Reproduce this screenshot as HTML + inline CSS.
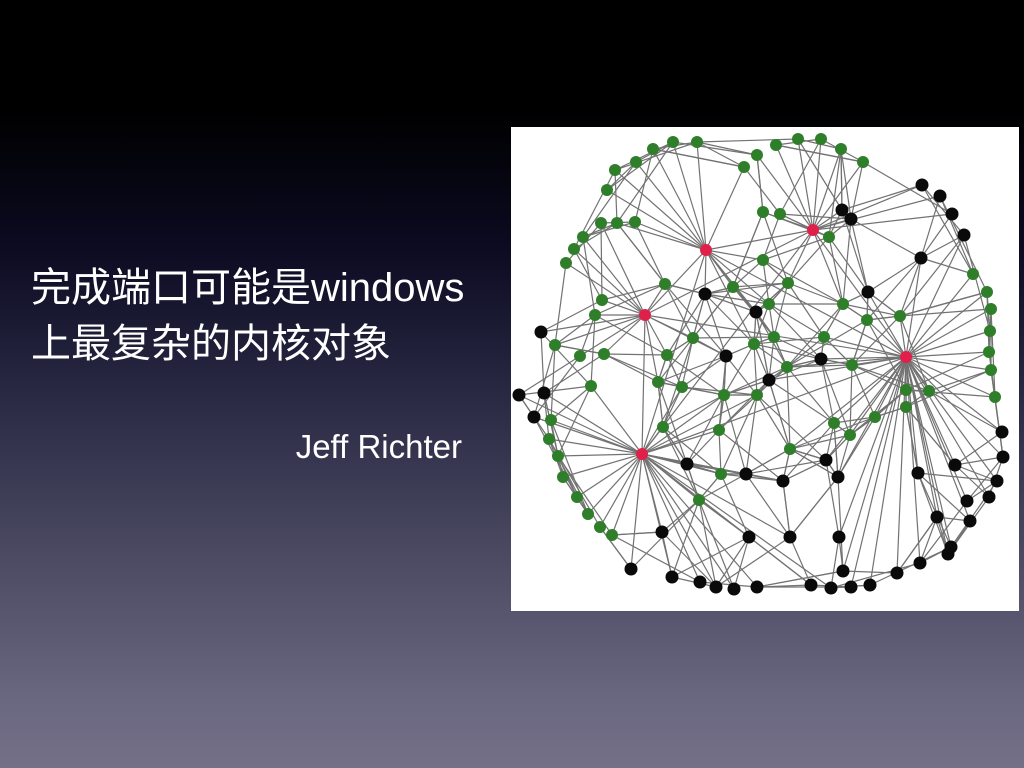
<!DOCTYPE html>
<html><head><meta charset="utf-8">
<style>
html,body{margin:0;padding:0;}
body{width:1024px;height:768px;overflow:hidden;position:relative;
background:linear-gradient(to bottom,#000 0px,#000 110px,#0c0b22 250px,#2a2a45 400px,#4c4b63 560px,#6a6780 700px,#747088 768px);
font-family:"Liberation Sans","Noto Sans CJK SC",sans-serif;color:#fff;}
.t{position:absolute;left:31px;font-size:40px;line-height:40px;white-space:nowrap;}
.a{position:absolute;right:562px;top:430px;font-size:33px;line-height:34px;}
.img{position:absolute;left:511px;top:127px;width:508px;height:484px;background:#fff;}
</style></head><body>
<div class="t" style="top:268px">完成端口可能是windows</div>
<div class="t" style="top:324px">上最复杂的内核对象</div>
<div class="a">Jeff Richter</div>
<div class="img"><svg id="g" width="508" height="484" viewBox="0 0 508 484"><g id="L" stroke="#444" stroke-width="1.2" opacity="0.75"></g><g id="N"></g></svg></div>
<script>
var R=[[195,123],[302,103],[134,188],[395,230],[131,327]];
var G=[[162,15],[186,15],[142,22],[125,35],[104,43],[96,63],[90,96],[106,96],[124,95],[72,110],[63,122],[55,136],[233,40],[246,28],[265,18],[287,12],[310,12],[330,22],[352,35],[252,85],[269,87],[462,147],[476,165],[480,182],[479,204],[478,225],[480,243],[484,270],[44,218],[91,173],[84,188],[69,229],[93,227],[80,259],[40,293],[38,312],[47,329],[52,350],[66,370],[77,387],[89,400],[101,408],[252,133],[154,157],[222,160],[258,177],[277,156],[332,177],[313,210],[389,189],[356,193],[182,211],[243,217],[263,210],[156,228],[147,255],[171,260],[213,268],[246,268],[276,240],[341,238],[395,263],[418,264],[395,280],[364,290],[323,296],[339,308],[279,322],[152,300],[208,303],[210,347],[188,373],[318,110]];
var B=[[411,58],[429,69],[441,87],[453,108],[410,131],[331,83],[340,92],[357,165],[194,167],[245,185],[310,232],[215,229],[258,253],[30,205],[8,268],[33,266],[23,290],[176,337],[235,347],[272,354],[327,350],[315,333],[407,346],[444,338],[491,305],[492,330],[486,354],[478,370],[456,374],[426,390],[459,394],[440,420],[437,427],[409,436],[386,446],[151,405],[120,442],[161,450],[189,455],[205,460],[223,462],[246,460],[238,410],[279,410],[328,410],[332,444],[359,458],[340,460],[320,461],[300,458]];
var L=document.getElementById('L'),N=document.getElementById('N'),ns='http://www.w3.org/2000/svg';
function ln(a,b){var l=document.createElementNS(ns,'line');l.setAttribute('x1',a[0]);l.setAttribute('y1',a[1]);l.setAttribute('x2',b[0]);l.setAttribute('y2',b[1]);L.appendChild(l);}
function d(a,b){return (a[0]-b[0])*(a[0]-b[0])+(a[1]-b[1])*(a[1]-b[1]);}
var all=G.concat(B);
all.forEach(function(p){var best=R[0];R.forEach(function(r){if(d(p,r)<d(p,best))best=r;});ln(p,best);
 var s=all.filter(function(q){return q!==p;}).sort(function(x,y){return d(p,x)-d(p,y);});
 var inner=d(p,[255,250])<160*160;
 if(inner){ln(p,s[0]);ln(p,s[1]);ln(p,s[2]);ln(p,s[4]);ln(p,s[7]);ln(p,s[10]);}else{ln(p,s[3]);ln(p,s[8]);}
});
for(var i=0;i<R.length;i++)for(var j=i+1;j<R.length;j++)ln(R[i],R[j]);
function c(p,r,f){var e=document.createElementNS(ns,'circle');e.setAttribute('cx',p[0]);e.setAttribute('cy',p[1]);e.setAttribute('r',r);e.setAttribute('fill',f);N.appendChild(e);}
G.forEach(function(p){c(p,6,'#2f7f2a');});
B.forEach(function(p){c(p,6.5,'#0a0a0a');});
R.forEach(function(p){c(p,6,'#e0204a');});
</script>
</body></html>
